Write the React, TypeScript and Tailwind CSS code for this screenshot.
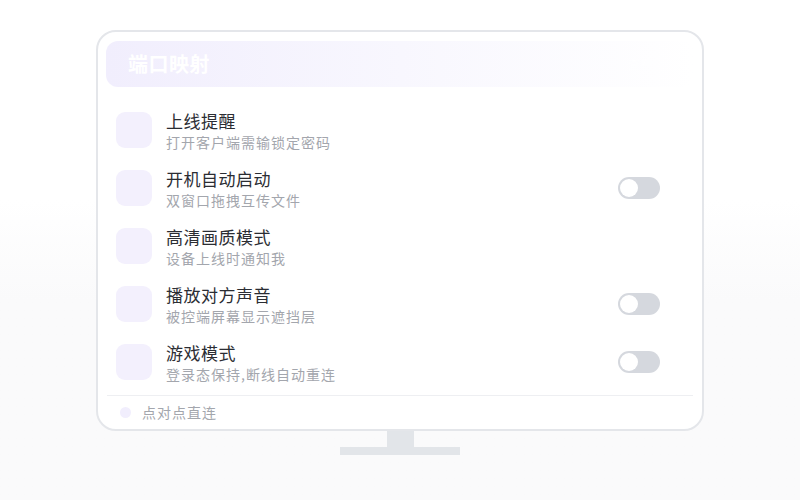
const items = [
  { title: '上线提醒', desc: '打开客户端需输锁定密码', toggle: false },
  { title: '开机自动启动', desc: '双窗口拖拽互传文件', toggle: true },
  { title: '高清画质模式', desc: '设备上线时通知我', toggle: false },
  { title: '播放对方声音', desc: '被控端屏幕显示遮挡层', toggle: true },
  { title: '游戏模式', desc: '登录态保持,断线自动重连', toggle: true },
];

function Toggle() {
  return (
    <div className="w-[42px] h-[22px] rounded-full bg-[#d5d8de] p-[2px] flex items-center">
      <div className="w-[18px] h-[18px] rounded-full bg-white" />
    </div>
  );
}

export default function App() {
  return (
    <div
      className="w-[800px] h-[500px] flex flex-col items-center pt-[30px] bg-gradient-to-b from-white from-40% to-[#fafafb] to-60%"
      style={{ fontFamily: '"Noto Sans CJK SC", "Noto Sans", sans-serif' }}
    >
      <div className="w-[608px] h-[401px] rounded-[20px] border-2 border-[#e4e6ea] bg-white flex flex-col">
        <div className="mx-[8px] mt-[9px] h-[46px] rounded-[12px] bg-gradient-to-r from-[#f1eefd] via-[#f8f7fe] to-white flex items-center justify-between pl-[22px] pr-[18px]">
          <span className="text-white text-[20px] font-bold tracking-[0.5px]">端口映射</span>
          <span className="text-white text-[12px]">查看全部</span>
        </div>

        <div className="mt-[14px] flex flex-col">
          {items.map((item) => (
            <div key={item.title} className="h-[58px] flex items-center pl-[18px] pr-[42px]">
              <div className="w-[36px] h-[36px] rounded-[9px] bg-[#f3f0fd]" />
              <div className="ml-[14px] flex-1 flex flex-col">
                <span className="text-[17px] leading-[22px] text-[#2b2d33] tracking-[0.5px]">{item.title}</span>
                <span className="text-[14px] leading-[18px] text-[#a3a6ad] tracking-[1px] mt-[1px]">{item.desc}</span>
              </div>
              {item.toggle && <Toggle />}
            </div>
          ))}
        </div>

        <div className="mx-[9px] mt-[4px] border-t border-[#eeeff2]" />
        <div className="flex-1 flex items-center pl-[22px]">
          <div className="w-[11px] h-[11px] rounded-full bg-[#f1eefd]" />
          <span className="ml-[11px] text-[14px] text-[#a3a6ad] tracking-[1px]">点对点直连</span>
        </div>
      </div>
      <div className="w-[27px] h-[16px] bg-[#e2e5e9]" />
      <div className="w-[120px] h-[8px] bg-[#e2e5e9]" />
    </div>
  );
}
